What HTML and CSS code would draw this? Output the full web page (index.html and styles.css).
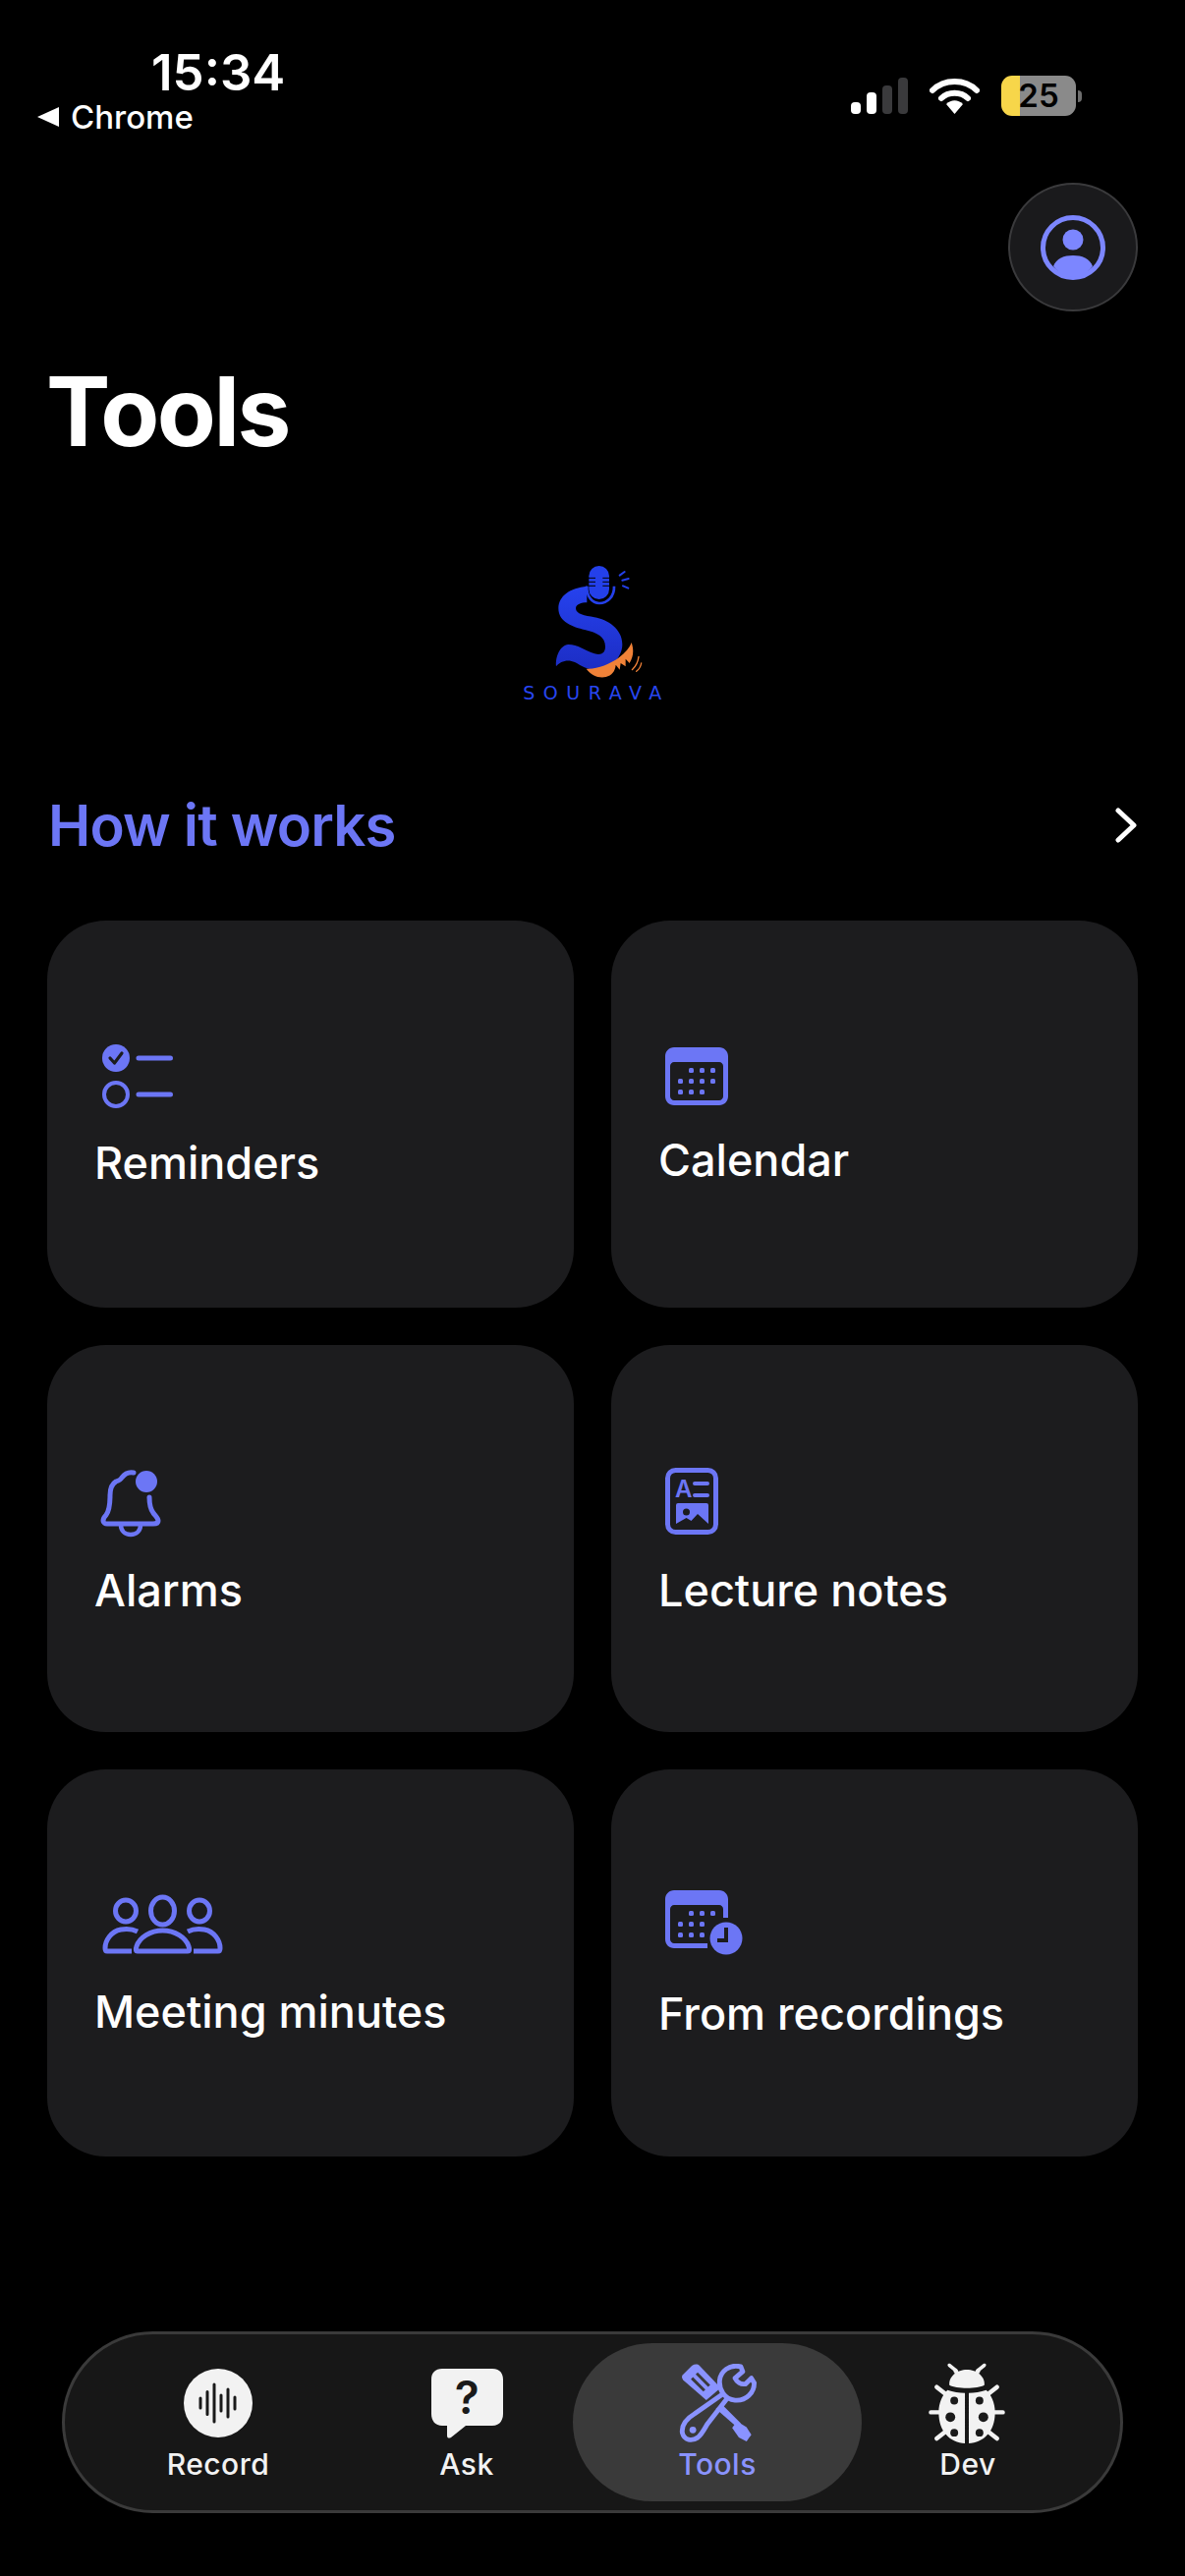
FILE: index.html
```html
<!DOCTYPE html>
<html>
<head>
    <title>Tools</title>
    <link rel="stylesheet" href="styles.css">
</head>
<body>
    <div id="screen">
        <div class="status-bar">
            <div class="status-left">
                <div class="clock">15:34</div>
                <div class="back-app"><span class="back-arrow"></span>Chrome</div>
            </div>
            <div class="status-right">
                <svg class="signal" viewBox="0 0 58 37">
                    <rect x="0" y="25" width="10" height="12" rx="4" fill="#fff"/>
                    <rect x="16" y="15" width="10" height="22" rx="4" fill="#fff"/>
                    <rect x="32" y="8" width="10" height="29" rx="4" fill="#3a3a3c"/>
                    <rect x="48" y="0" width="10" height="37" rx="4" fill="#3a3a3c"/>
                </svg>
                <svg class="wifi" viewBox="0 0 51 37">
                    <path d="M3 13 C15 1 36 1 48 13" fill="none" stroke="#fff" stroke-width="6" stroke-linecap="round"/>
                    <path d="M12 21 C19 14 32 14 39 21" fill="none" stroke="#fff" stroke-width="6" stroke-linecap="round"/>
                    <path d="M17 27 C22 22 29 22 34 27 L25.500 37 Z" fill="#fff"/>
                </svg>
                <div class="battery">
                    <div class="battery-level">25</div>
                </div>
                <div class="battery-nub"></div>
            </div>
        </div>

        <div class="top-row">
            <div class="profile-button">
                <svg class="profile-icon" viewBox="0 0 66 66">
                    <circle cx="33" cy="33" r="30.500" fill="none" stroke="#7c86ff" stroke-width="5"/>
                    <circle cx="33" cy="25" r="10.500" fill="#7c86ff"/>
                    <path d="M13 52 C16 44 24 41 33 41 C42 41 50 44 53 52 C47 60 40 63 33 63 C26 63 19 60 13 52 Z" fill="#7c86ff"/>
                </svg>
            </div>
        </div>

        <h1 class="page-title">Tools</h1>

        <div class="logo">
            <svg class="logo-mark" viewBox="0 0 720 420">
                <defs>
                    <linearGradient id="logo-blue" x1="0" y1="0" x2="0" y2="1">
                        <stop offset="0" stop-color="#2642ee"/>
                        <stop offset="1" stop-color="#1c2dc4"/>
                    </linearGradient>
                </defs>
                <rect x="358" y="78" width="62" height="102" rx="31" fill="#2440ea"/>
                <path d="M356 115h22M356 127h22M356 139h22M400 115h22M400 127h22M400 139h22" stroke="#000" stroke-width="3"/>
                <path d="M352 140 C350 170 368 192 390 192 C414 192 436 172 435 140" fill="none" stroke="#2440ea" stroke-width="8"/>
                <path d="M452 107 L467 96 M460 122 L479 117 M462 139 L478 146" stroke="#2440ea" stroke-width="6" stroke-linecap="round"/>
                <path d="M352 140 C300 145 265 170 265 208 C265 250 310 265 345 273 C385 282 408 295 408 325 C408 345 395 352 375 346 C345 336 325 318 295 318 C270 321 255 355 258 385 C270 368 295 362 315 372 C335 382 350 396 385 396 C420 394 460 360 460 318 C460 270 415 242 375 235 C345 230 318 225 318 208 C318 195 335 190 352 190 Z" fill="url(#logo-blue)"/>
                <path d="M350 392 C380 395 420 380 450 358 C470 342 482 328 488 312 C496 335 494 355 482 375 L470 362 L470 385 L455 375 L452 395 L440 380 C438 400 428 412 410 417 C388 422 365 412 350 392 Z" fill="#f08238"/>
                <path d="M510 355 C508 372 502 384 490 395 M518 375 C516 386 511 394 503 400" fill="none" stroke="#f08238" stroke-width="4" stroke-linecap="round"/>
            </svg>
            <div class="logo-text">SOURAVA</div>
        </div>

        <div class="how-row">
            <span class="how-title">How it works</span>
            <svg class="chevron" viewBox="0 0 24 36">
                <path d="M4 3 L20 18 L4 33" fill="none" stroke="#fff" stroke-width="5" stroke-linecap="round" stroke-linejoin="round"/>
            </svg>
        </div>

        <div class="tool-grid">
            <div class="tool-card">
                <svg class="icon-reminders" viewBox="0 0 72 65">
                    <circle cx="14" cy="14" r="14" fill="#6c76f5"/>
                    <path d="M8 14 L12.500 19 L20 9" fill="none" stroke="#1c1c1e" stroke-width="3.200" stroke-linecap="round" stroke-linejoin="round"/>
                    <circle cx="14" cy="51" r="12" fill="none" stroke="#6c76f5" stroke-width="4"/>
                    <path d="M37 14 H69.500 M37 51 H69.500" stroke="#6c76f5" stroke-width="5" stroke-linecap="round"/>
                </svg>
                <div class="tool-label">Reminders</div>
            </div>
            <div class="tool-card">
                <svg class="icon-calendar" viewBox="0 0 64 59">
                    <use href="#calendar-shape"/>
                </svg>
                <div class="tool-label">Calendar</div>
            </div>
            <div class="tool-card">
                <svg class="icon-alarms" viewBox="0 0 61 67">
                    <path d="M33 2 C28 1 24 3 21 7 C20 9 18 10 15 11 C10 14 9 19 9 25 C9 34 8 41 5 45 C3 47 2 49 2 51 C2 53 4 54 6 54 H53 C56 54 58 53 58 51 C58 48 55 46 53 43 C50 39 49 34 49 27" fill="none" stroke="#6c76f5" stroke-width="5" stroke-linecap="round"/>
                    <path d="M20 55 C20 61 24 65 30 65 C36 65 40 61 40 55" fill="none" stroke="#6c76f5" stroke-width="4.500"/>
                    <circle cx="46" cy="11" r="11" fill="#6c76f5"/>
                </svg>
                <div class="tool-label">Alarms</div>
            </div>
            <div class="tool-card">
                <svg class="icon-lecture" viewBox="0 0 54 68">
                    <rect x="2.500" y="2.500" width="49" height="63" rx="8" fill="none" stroke="#6c76f5" stroke-width="5"/>
                    <text class="lecture-letter" x="10" y="30">A</text>
                    <path d="M30 16 H43 M30 28 H43" stroke="#6c76f5" stroke-width="4" stroke-linecap="round"/>
                    <path d="M13 36 H42 Q44 36 44 38 V57 L33 47 L26.500 54 L21.500 51 L11 57 V38 Q11 36 13 36 Z" fill="#6c76f5"/>
                    <circle cx="21.500" cy="45" r="3.500" fill="#1c1c1e"/>
                </svg>
                <div class="tool-label">Lecture notes</div>
            </div>
            <div class="tool-card">
                <svg class="icon-meeting" viewBox="0 0 123 60">
                    <g fill="none" stroke="#6c76f5" stroke-width="5">
                        <ellipse cx="24" cy="17" rx="10.500" ry="11"/>
                        <ellipse cx="61.500" cy="17" rx="12" ry="14"/>
                        <ellipse cx="99" cy="17" rx="10.500" ry="11"/>
                        <path d="M36 38 C30 35 24 35 19 36 C9 38 3 47 3 55 C3 57 3 58 5 58 H30"/>
                        <path d="M87 38 C93 35 99 35 104 36 C114 38 120 47 120 55 C120 57 120 58 118 58 H93"/>
                        <path d="M36 58 C34 58 34 56 35 53 C38 44 49 37 61.500 37 C74 37 85 44 88 53 C89 56 89 58 87 58 Z"/>
                    </g>
                </svg>
                <div class="tool-label">Meeting minutes</div>
            </div>
            <div class="tool-card">
                <svg class="icon-recordings" viewBox="0 0 79 66">
                    <use href="#calendar-base"/>
                    <circle cx="62" cy="49" r="16.500" fill="#6c76f5"/>
                    <path d="M62 38 V51 H53" fill="none" stroke="#1c1c1e" stroke-width="4"/>
                </svg>
                <div class="tool-label">From recordings</div>
            </div>
        </div>

        <div class="nav-wrap">
            <div class="nav-bar">
                <div class="nav-item">
                    <div class="nav-icon-box">
                        <svg class="nav-record" viewBox="0 0 70 70">
                            <circle cx="35" cy="35" r="35" fill="#f2f2f2"/>
                            <path d="M17 30v10M24 23.500v23M31 16v38M38 27v16M45 21v28M52 29v12" stroke="#1a1a1a" stroke-width="3" stroke-linecap="round"/>
                        </svg>
                    </div>
                    <span>Record</span>
                </div>
                <div class="nav-item">
                    <div class="nav-icon-box">
                        <svg class="nav-ask" viewBox="0 0 75 72">
                            <path d="M12 1 H63 C70 1 74 5 74 12 V47 C74 54 70 59 63 59 H36 L21 71 C19 72 17 72 17 69 V59 H12 C5 59 1 54 1 47 V12 C1 5 5 1 12 1 Z" fill="#f2f2f2"/>
                            <text class="ask-mark" x="37.500" y="47">?</text>
                        </svg>
                    </div>
                    <span>Ask</span>
                </div>
                <div class="nav-item nav-active">
                    <div class="nav-icon-box">
                        <svg class="nav-tools" viewBox="0 0 80 82">
                            <path d="M3 12 L13 2 C16 0 19 0 21 2 L43 25 L28 38 L5 18 C3 16 2 14 3 12 Z" fill="#8a93ff"/>
                            <path d="M13 15 L26 28" stroke="#3a3a3a" stroke-width="3"/>
                            <path d="M18 10 L31 23" stroke="#3a3a3a" stroke-width="3"/>
                            <path d="M44 42 L64 62 L60 66 L38 47 Z" fill="#8a93ff"/>
                            <path d="M60 60 L70 66 L75 74 L70 81 L62 77 L55 67 Z" fill="#8a93ff"/>
                            <path d="M46 31 L16 52 C6 58 2 64 3 72 C5 80 13 81 19 77 C23 74 25 70 29 63 L50 36" fill="none" stroke="#8a93ff" stroke-width="5" stroke-linejoin="round"/>
                            <circle cx="14" cy="69" r="3.500" fill="#8a93ff"/>
                            <path d="M64 3 C52 0 43 8 42 17 C41 27 47 37 58 38 C70 39 78 30 78 20 L75 15 L69 21 C64 22 60 19 58 15 L66 8 Z" fill="none" stroke="#8a93ff" stroke-width="5" stroke-linejoin="round"/>
                        </svg>
                    </div>
                    <span>Tools</span>
                </div>
                <div class="nav-item">
                    <div class="nav-icon-box">
                        <svg class="nav-bug" viewBox="0 1 78 83">
                            <path d="M22 2 C20 1 18 3 20 5 L25 9 C26 12 27 13 30 12 C31 9 29 7 27 6 Z M56 2 C58 1 60 3 58 5 L53 9 C52 12 51 13 48 12 C47 9 49 7 51 6 Z" fill="#f2f2f2"/>
                            <path d="M21 24 C20 15 29 8 39 8 C49 8 58 15 57 24 C50 28 28 28 21 24 Z" fill="#f2f2f2"/>
                            <path d="M8 26 L18 34 M70 26 L60 34 M2 52 H14 M76 52 H64 M8 79 L18 71 M70 79 L60 71" stroke="#f2f2f2" stroke-width="4.500" stroke-linecap="round"/>
                            <path d="M37 32 V84 C22 83 10 72 10 52 C10 42 14 34 19 29 C25 31 31 32 37 32 Z" fill="#f2f2f2"/>
                            <path d="M41 32 V84 C56 83 68 72 68 52 C68 42 64 34 59 29 C53 31 47 32 41 32 Z" fill="#f2f2f2"/>
                            <g fill="#1a1a1a">
                                <circle cx="26" cy="40" r="4"/><circle cx="52" cy="40" r="4"/>
                                <circle cx="22" cy="57" r="5"/><circle cx="56" cy="57" r="5"/>
                                <circle cx="26" cy="73" r="4"/><circle cx="52" cy="73" r="4"/>
                            </g>
                        </svg>
                    </div>
                    <span>Dev</span>
                </div>
            </div>
        </div>
    </div>

    <svg class="svg-defs" width="0" height="0">
        <defs>
            <g id="calendar-dots" fill="#6c76f5">
                <rect x="24" y="21" width="5" height="5" rx="1.500"/>
                <rect x="35" y="21" width="5" height="5" rx="1.500"/>
                <rect x="46" y="21" width="5" height="5" rx="1.500"/>
                <rect x="13" y="32" width="5" height="5" rx="1.500"/>
                <rect x="24" y="32" width="5" height="5" rx="1.500"/>
                <rect x="35" y="32" width="5" height="5" rx="1.500"/>
                <rect x="13" y="43" width="5" height="5" rx="1.500"/>
                <rect x="24" y="43" width="5" height="5" rx="1.500"/>
                <rect x="35" y="43" width="5" height="5" rx="1.500"/>
            </g>
            <g id="calendar-shape">
                <path fill-rule="evenodd" d="M9 0 H55 C60 0 64 4 64 9 V50 C64 55 60 59 55 59 H9 C4 59 0 55 0 50 V9 C0 4 4 0 9 0 Z M9 15 C7 15 5 17 5 19 V50 C5 52 7 54 9 54 H55 C57 54 59 52 59 50 V19 C59 17 57 15 55 15 Z" fill="#6c76f5"/>
                <use href="#calendar-dots"/>
                <rect x="46" y="32" width="5" height="5" rx="1.500" fill="#6c76f5"/>
            </g>
            <g id="calendar-base">
                <path fill-rule="evenodd" d="M9 0 H55 C60 0 64 4 64 9 V28 H59 V19 C59 17 57 15 55 15 H9 C7 15 5 17 5 19 V50 C5 52 7 54 9 54 H43 V59 H9 C4 59 0 55 0 50 V9 C0 4 4 0 9 0 Z" fill="#6c76f5"/>
                <use href="#calendar-dots"/>
            </g>
        </defs>
    </svg>
</body>
</html>
```

FILE: styles.css
```css
html, body {
    margin: 0;
    padding: 0;
    background-color: #000;
}

body {
    font-family: Inter, "Liberation Sans", sans-serif;
    color: #fff;
}

#screen {
    width: 1206px;
    height: 2622px;
    overflow: hidden;
    display: flex;
    flex-direction: column;
}

.svg-defs {
    display: block;
    height: 0;
}

/* status bar */

.status-bar {
    height: 186px;
    flex: none;
    display: flex;
    justify-content: space-between;
    align-items: flex-start;
}

.status-left {
    padding-top: 45px;
}

.clock {
    padding-left: 154px;
    font-size: 51px;
    line-height: 58px;
    font-weight: 600;
}

.back-app {
    display: flex;
    align-items: center;
    padding-left: 38px;
    margin-top: -4px;
    font-size: 33px;
    line-height: 40px;
    font-weight: 500;
}

.back-arrow {
    width: 0;
    height: 0;
    margin-right: 12px;
    border-top: 10px solid transparent;
    border-bottom: 10px solid transparent;
    border-right: 22px solid #fff;
}

.status-right {
    display: flex;
    align-items: center;
    padding-top: 77px;
    padding-right: 105px;
}

.signal {
    width: 58px;
    height: 37px;
}

.wifi {
    width: 51px;
    height: 37px;
    margin-left: 22px;
}

.battery {
    width: 76px;
    height: 41px;
    margin-left: 22px;
    border-radius: 11px;
    overflow: hidden;
    background: linear-gradient(to right, #f7d64a 19px, #8a8a8a 19px);
}

.battery-level {
    text-align: center;
    font-size: 33px;
    line-height: 41px;
    font-weight: 600;
    color: #000;
}

.battery-nub {
    width: 4px;
    height: 12px;
    margin-left: 2px;
    border-radius: 0 4px 4px 0;
    background-color: #6e6e6e;
}

/* header */

.top-row {
    display: flex;
    justify-content: flex-end;
    padding-right: 48px;
}

.profile-button {
    width: 128px;
    height: 127px;
    display: flex;
    align-items: center;
    justify-content: center;
    background-color: #1a1a1c;
    border: 2px solid #3a3a3c;
    border-radius: 50%;
}

.profile-icon {
    width: 66px;
    height: 66px;
}

.page-title {
    margin: 42px 0 0 47px;
    font-size: 98px;
    line-height: 120px;
    font-weight: 700;
    letter-spacing: -2.500px;
}

.logo {
    margin-top: 71px;
    display: flex;
    flex-direction: column;
    align-items: center;
}

.logo-mark {
    width: 240px;
    height: 140px;
    margin-right: 6px;
}

.logo-text {
    margin-top: 5px;
    margin-left: 8px;
    font-family: "DejaVu Sans", sans-serif;
    font-size: 19px;
    line-height: 20px;
    letter-spacing: 8.500px;
    color: #2846f0;
}

.how-row {
    margin-top: 89px;
    padding: 0 48px 0 49px;
    display: flex;
    justify-content: space-between;
    align-items: center;
}

.how-title {
    font-size: 58px;
    line-height: 72px;
    font-weight: 600;
    letter-spacing: -0.800px;
    color: #6c76f5;
}

.chevron {
    width: 24px;
    height: 36px;
}

/* cards */

.tool-grid {
    margin: 61px 48px 0;
    display: grid;
    grid-template-columns: 1fr 1fr;
    grid-auto-rows: 394px;
    column-gap: 38px;
    row-gap: 38px;
}

.tool-card {
    padding-left: 48px;
    background-color: #1c1c1e;
    border-radius: 60px;
}

.tool-card svg {
    display: block;
    overflow: visible;
}

.tool-label {
    font-size: 45px;
    line-height: 54px;
    font-weight: 500;
}

.icon-reminders {
    width: 72px;
    height: 65px;
    margin: 126px 0 29px 8px;
}

.icon-calendar {
    width: 64px;
    height: 59px;
    margin: 129px 0 29px 7px;
}

.icon-alarms {
    width: 61px;
    height: 67px;
    margin: 128px 0 28px 7px;
}

.icon-lecture {
    width: 54px;
    height: 68px;
    margin: 125px 0 30px 7px;
}

.icon-meeting {
    width: 123px;
    height: 60px;
    margin: 127px 0 33px 8px;
}

.icon-recordings {
    width: 79px;
    height: 66px;
    margin: 123px 0 33px 7px;
}

.lecture-letter {
    font-family: Inter, sans-serif;
    font-size: 24px;
    font-weight: 600;
    fill: #6c76f5;
}

/* bottom nav */

.nav-wrap {
    margin-top: 178px;
    padding: 0 63px;
}

.nav-bar {
    height: 185px;
    box-sizing: border-box;
    padding: 9px 11px;
    display: grid;
    grid-template-columns: 290px 216px 294px 216px;
    background-color: #171717;
    border: 3px solid #3a3a3a;
    border-radius: 93px;
}

.nav-item {
    display: flex;
    flex-direction: column;
    align-items: center;
    padding-top: 19px;
    font-size: 30px;
    line-height: 38px;
    font-weight: 450;
    letter-spacing: 0.500px;
    color: #f2f2f2;
    border-radius: 81px;
}

.nav-icon-box {
    height: 84px;
    margin-bottom: 1px;
    display: flex;
    align-items: center;
    justify-content: center;
}

.nav-record {
    width: 70px;
    height: 70px;
}

.nav-ask {
    width: 75px;
    height: 72px;
}

.nav-tools {
    width: 81px;
    height: 80px;
}

.nav-bug {
    width: 78px;
    height: 82px;
    margin-right: 3px;
}

.nav-active {
    background-color: #3a3a3a;
    color: #8a93ff;
}

.ask-mark {
    font-family: Inter, sans-serif;
    font-size: 46px;
    font-weight: 600;
    text-anchor: middle;
    fill: #1a1a1a;
}
```
